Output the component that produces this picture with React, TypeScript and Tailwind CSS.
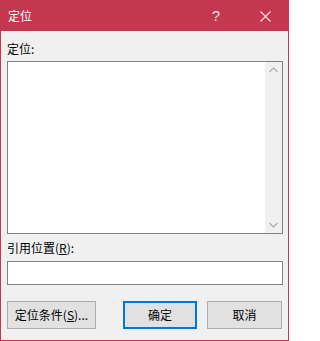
import React from "react";

export default function App() {
  const font = { fontFamily: '"Noto Sans CJK SC", "Noto Sans", sans-serif' };
  return (
    <div
      className="w-[289px] h-[341px] border border-[#c4384f] bg-[#f0f0f0] flex flex-col text-[12px] text-black"
      style={font}
    >
      <div className="h-[30px] bg-[#c4384f] flex items-center text-white shrink-0">
        <span className="pl-[7px] leading-[16px]">定位</span>
        <div className="flex-1" />
        <span
          className="w-[10px] text-center text-[15px] leading-[16px] mr-[39px] text-[#f7dfe3]"
          style={{ fontFamily: '"Liberation Sans", sans-serif' }}
        >
          ?
        </span>
        <svg width="11" height="11" viewBox="0 0 11 11" className="mr-[17px]">
          <path d="M0.5 0.5 L10.5 10.5 M10.5 0.5 L0.5 10.5" stroke="#f7e1e5" strokeWidth="1.1" fill="none" />
        </svg>
      </div>
      <div className="pl-[6px] flex flex-col">
        <div className="pt-[10px] leading-[16px]">定位:</div>
        <div className="mt-[4px] w-[276px] h-[173px] border border-[#828282] bg-white flex justify-end">
          <div className="w-[17px] h-full bg-[#f0f0f0] flex flex-col items-center justify-between py-[5px]">
            <svg width="9" height="6" viewBox="0 0 9 6">
              <path d="M0.5 5 L4.5 1 L8.5 5" stroke="#b0b0b0" strokeWidth="1.3" fill="none" />
            </svg>
            <svg width="9" height="6" viewBox="0 0 9 6">
              <path d="M0.5 1 L4.5 5 L8.5 1" stroke="#b0b0b0" strokeWidth="1.3" fill="none" />
            </svg>
          </div>
        </div>
        <div className="mt-[6px] leading-[16px]">
          引用位置(<span className="underline">R</span>):
        </div>
        <div className="mt-[5px] w-[276px] h-[24px] border border-[#828282] bg-white" />
        <div className="mt-[16px] flex">
          <div className="w-[89px] h-[28px] border border-[#adadad] bg-[#e1e1e1] flex items-center justify-center">
            定位条件(<span className="underline">S</span>)...
          </div>
          <div className="ml-[27px] w-[74px] h-[28px] border-2 border-[#0078d7] bg-[#e1e1e1] flex items-center justify-center">
            确定
          </div>
          <div className="ml-[10px] w-[75px] h-[28px] border border-[#adadad] bg-[#e1e1e1] flex items-center justify-center">
            取消
          </div>
        </div>
      </div>
    </div>
  );
}
